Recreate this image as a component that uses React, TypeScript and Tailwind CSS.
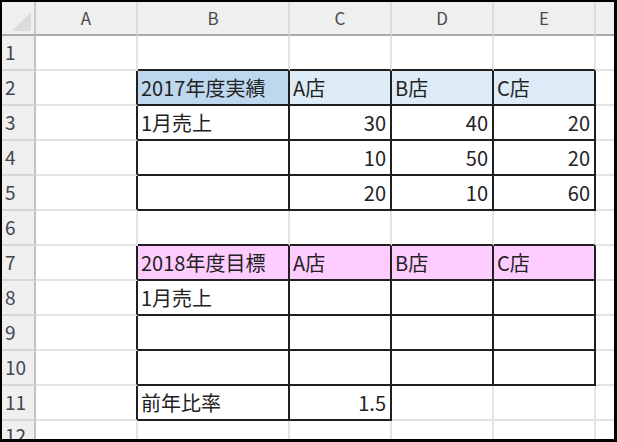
import React from "react";

type Cell = { t?: string; right?: boolean; bg?: string };

const font = { fontFamily: '"Noto Sans CJK JP", "Noto Sans", sans-serif' };

const cols = ["A", "B", "C", "D", "E", ""];

const data: Record<number, Record<number, Cell>> = {
  2: {
    1: { t: "2017年度実績", bg: "bg-[#bdd7ee]" },
    2: { t: "A店", bg: "bg-[#ddebf7]" },
    3: { t: "B店", bg: "bg-[#ddebf7]" },
    4: { t: "C店", bg: "bg-[#ddebf7]" },
  },
  3: { 1: { t: "1月売上" }, 2: { t: "30", right: true }, 3: { t: "40", right: true }, 4: { t: "20", right: true } },
  4: { 2: { t: "10", right: true }, 3: { t: "50", right: true }, 4: { t: "20", right: true } },
  5: { 2: { t: "20", right: true }, 3: { t: "10", right: true }, 4: { t: "60", right: true } },
  7: {
    1: { t: "2018年度目標", bg: "bg-[#ffccff]" },
    2: { t: "A店", bg: "bg-[#ffccff]" },
    3: { t: "B店", bg: "bg-[#ffccff]" },
    4: { t: "C店", bg: "bg-[#ffccff]" },
  },
  8: { 1: { t: "1月売上" } },
  11: { 1: { t: "前年比率" }, 2: { t: "1.5", right: true } },
};

function inTable(r: number, c: number) {
  if (r >= 2 && r <= 5 && c >= 1 && c <= 4) return true;
  if (r >= 7 && r <= 10 && c >= 1 && c <= 4) return true;
  if (r === 11 && c >= 1 && c <= 2) return true;
  return false;
}

export default function App() {
  const rows = Array.from({ length: 12 }, (_, i) => i + 1);
  return (
    <div className="w-[617px] h-[442px] bg-white">
      <div
        className="w-full h-full border-l-2 border-t-2 border-r-[3px] border-b-[3px] border-black grid grid-cols-[34px_102px_152px_102px_102px_102px_1fr] grid-rows-[34px_repeat(11,35px)_1fr] overflow-hidden"
        style={font}
      >
        <div className="bg-[#efefef] border-r-2 border-b-2 border-r-[#c8c8c8] border-b-[#ababab] relative">
          <svg className="absolute left-0 top-0" width="34" height="34" viewBox="0 0 34 34">
            <polygon points="10,29 29,10 29,29" fill="#dcdcdc" />
          </svg>
        </div>
        {cols.map((c, i) => (
          <div
            key={"h" + i}
            className={`bg-[#efefef] border-b-2 border-b-[#ababab] flex items-center justify-center text-[17px] text-[#4a4a4a] ${
              i < 5 ? "border-r-2 border-r-[#dadada]" : ""
            }`}
          >
            {c}
          </div>
        ))}
        {rows.map((r) => (
          <React.Fragment key={r}>
            <div className="bg-[#efefef] border-r-2 border-b-2 border-r-[#c2c2c2] border-b-[#d6d6d6] flex items-center pl-[3px] text-[19px] text-[#3f4650]">
              {r}
            </div>
            {cols.map((_, c) => {
              const cell = data[r]?.[c];
              const rightBlack = inTable(r, c) || inTable(r, c + 1);
              const bottomBlack = inTable(r, c) || inTable(r + 1, c);
              return (
                <div
                  key={c}
                  className={`flex items-center text-[20px] leading-none text-[#222] ${cell?.bg ?? "bg-white"} ${
                    c < 5 ? "border-r-2" : ""
                  } border-b-2 ${rightBlack ? "border-r-[#1f1f1f]" : "border-r-[#e3e3e3]"} ${
                    bottomBlack ? "border-b-[#1f1f1f]" : "border-b-[#e3e3e3]"
                  } ${cell?.right ? "justify-end pr-[4px]" : "pl-[3px]"}`}
                >
                  {cell?.t ?? ""}
                </div>
              );
            })}
          </React.Fragment>
        ))}
      </div>
    </div>
  );
}
